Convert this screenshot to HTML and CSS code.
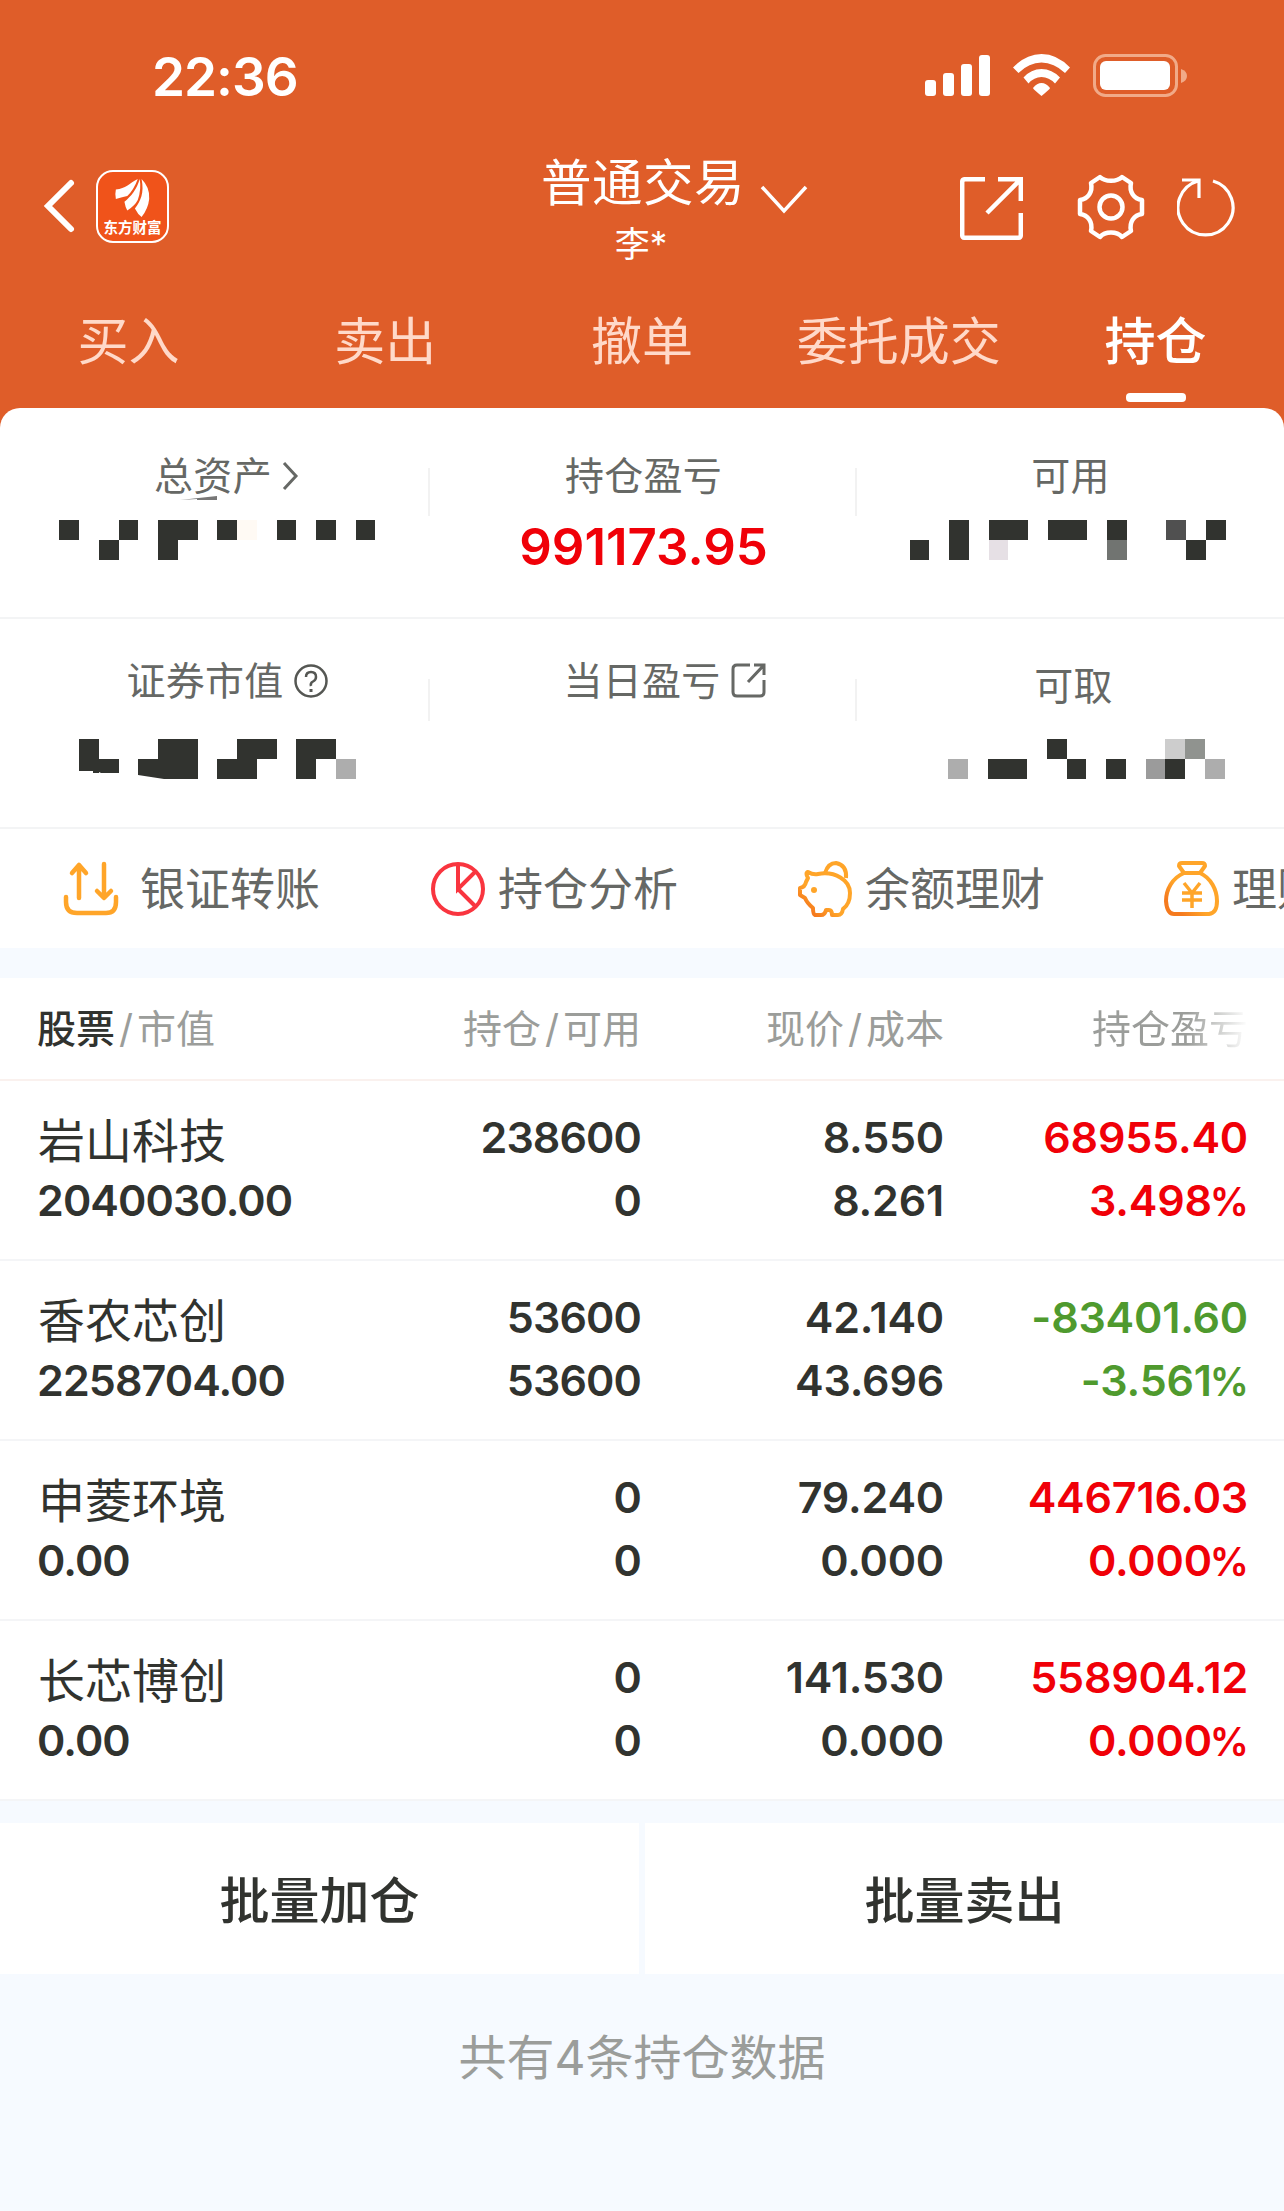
FILE: index.html
```
<!doctype html>
<html lang="zh-CN">
  <head>
    <meta charset="UTF-8" />
    <meta name="viewport" content="width=device-width, initial-scale=1.0" />
    <title>普通交易 - 持仓</title>
    <link rel="stylesheet" href="styles.css">
  </head>
  <body>
    <header class="top">
      <div class="statusbar">
        <span class="time">22:36</span>
        <svg class="status-icons" width="264" height="44" viewBox="0 0 264 44">
          <g fill="#fff">
            <rect x="0" y="26" width="11" height="16" rx="3" />
            <rect x="18" y="19" width="11" height="23" rx="3" />
            <rect x="36" y="10" width="11" height="32" rx="3" />
            <rect x="54" y="1" width="11" height="41" rx="3" />
            <path d="M88 13.500Q101 0 116.500 0Q132 0 145 13.500L140 19Q129 8.500 116.500 8.500Q104 8.500 93.500 19Z" />
            <path d="M98.500 23.500Q106 15 116.500 15Q127 15 135 23.500L130 29.500Q124 23 116.500 23Q109 23 103.500 29.500Z" />
            <path d="M108 34Q112 29 116.500 29Q121 29 125 34Q125 35 116.500 42Q108 35 108 34Z" />
            <rect x="175" y="7" width="70" height="29" rx="6" />
          </g>
          <rect x="169.500" y="1.500" width="82" height="40" rx="11" fill="none" stroke="#f1aa88" stroke-width="3" />
          <path d="M256 15q6 2 6 7t-6 7z" fill="#f1aa88" />
        </svg>
      </div>

      <div class="navbar">
        <div class="nav-left">
          <svg width="34" height="56" viewBox="0 0 34 56">
            <path d="M29 5L6 28L29 51" fill="none" stroke="#fff" stroke-width="6" stroke-linecap="round" />
          </svg>
          <div class="logo">
            <svg width="40" height="42" viewBox="0 0 40 42" fill="#fff">
              <path d="M25 1C15 6 13 11 2 12Q1 16 2 22Q9 20 14 19Q21 12 25 1Z" />
              <path d="M27 1C24 12 18 19 11 25Q12 31 14 34Q22 29 25 23Q29 12 27 1Z" />
              <path d="M29 1C32 16 28 24 22 32Q25 38 29 41Q36 32 37 22Q38 10 29 1Z" />
            </svg>
            <span>东方财富</span>
          </div>
        </div>
        <div class="nav-title">
          <h1>普通交易</h1>
          <p>李*</p>
        </div>
        <svg class="nav-arrow" width="48" height="32" viewBox="0 0 48 32">
          <path d="M2 3L24 27L46 3" fill="none" stroke="#fff" stroke-width="3.500" />
        </svg>
        <div class="nav-right">
          <svg width="63" height="63" viewBox="0 0 63 63" fill="none" stroke="#fff" stroke-width="4.500">
            <path d="M25 2.200H5Q2.200 2.200 2.200 5V58Q2.200 60.800 5 60.800H58Q60.800 60.800 60.800 58V36M38 2.200H60.800V24M60 3L27 36" />
          </svg>
          <svg class="gear" width="68" height="66" viewBox="0 0 68 66" fill="none" stroke="#fff" stroke-width="4.500">
            <path d="M23 3C28 8 40 8 45 3L54 9C52 18 57 25 65 26V40C57 41 52 48 54 57L45 63C40 57 28 57 23 63L14 57C16 48 11 41 3 40V26C11 25 16 18 14 9Z" stroke-linejoin="round" />
            <circle cx="34" cy="33" r="11.500" />
          </svg>
          <svg class="refresh" width="60" height="60" viewBox="0 0 60 60" fill="none" stroke="#fff" stroke-width="3.200">
            <path d="M36 4A27.500 27.500 0 1 1 21 4M5 3H22V21" />
          </svg>
        </div>
      </div>

      <nav class="tabs">
        <a>买入</a>
        <a>卖出</a>
        <a>撤单</a>
        <a>委托成交</a>
        <a class="active">持仓</a>
      </nav>
    </header>

    <main>
      <section class="assets">
        <div class="asset-row">
          <div class="asset">
            <div class="label has-icon">总资产
              <svg width="18" height="30" viewBox="0 0 18 30">
                <path d="M2 2L14 15L2 28" fill="none" stroke="#666865" stroke-width="3" />
              </svg>
            </div>
            <svg class="mask" width="316" height="64" viewBox="0 0 316 64" fill="#31332f">
              <path d="M121 4L158 0V4H138V3Z" fill="#777" />
              <path d="M0 24h20v20H0zM60 24h19v20H60zM40 44h20v20H40zM99 24h40v20h-20v20H99zM158 24h20v20h-20zM218 24h19v20h-19zM257 24h20v20h-20zM297 24h19v20h-19z" />
              <path d="M178 24h20v20h-20z" fill="#fffaf4" />
            </svg>
          </div>
          <div class="asset">
            <div class="label">持仓盈亏</div>
            <div class="total">991173.95</div>
          </div>
          <div class="asset">
            <div class="label usable">可用</div>
            <svg class="mask" width="316" height="64" viewBox="0 0 316 64" fill="#31332f">
              <path d="M0 44h19v20H0zM39 24h20v40H39zM79 24h39v20H79zM138 24h39v20h-39zM197 24h20v20h-20zM296 24h20v20h-20zM276 44h20v20h-20z" />
              <path d="M79 44h19v20H79z" fill="#e6e0e5" />
              <path d="M197 44h20v20h-20z" fill="#717471" />
              <path d="M256 24h20v20h-20z" fill="#505050" />
            </svg>
          </div>
        </div>
        <div class="asset-row second">
          <div class="asset">
            <div class="label has-icon">证券市值
              <svg width="34" height="34" viewBox="0 0 34 34" fill="none" stroke="#555753" stroke-width="2.500">
                <circle cx="17" cy="17" r="15.500" />
                <path d="M12 13Q12 8 17 8T22 13Q22 16 19 17.500T17 22" />
                <path d="M17 25v3" stroke-width="3" />
              </svg>
            </div>
            <svg class="mask low" width="277" height="40" viewBox="0 0 277 40" fill="#31332f">
              <path d="M0 0h20v20h20v14H22l-2-1v1h-6v-2H0zM59 20h20V0h40v40H85L59 36zM138 20h20V0h40v20h-20v20h-40zM217 0h40v20h-20v20h-20z" />
              <path d="M257 20h20v20h-20z" fill="#adadad" />
            </svg>
          </div>
          <div class="asset">
            <div class="label has-icon today">当日盈亏
              <svg width="35" height="35" viewBox="0 0 35 35" fill="none" stroke="#666865" stroke-width="3">
                <path d="M19 2H6Q2 2 2 6V29Q2 33 6 33H29Q33 33 33 29V17M23 2H33V12M32 3L17 19" />
              </svg>
            </div>
          </div>
          <div class="asset">
            <div class="label lower">可取</div>
            <svg class="mask low right" width="277" height="40" viewBox="0 0 277 40" fill="#31332f">
              <path d="M40 20h39v20H40zM99 0h20v20H99zM119 20h19v20h-19zM158 20h20v20h-20zM217 20h20v20h-20z" />
              <path d="M0 20h20v20H0zM257 20h20v20h-20z" fill="#adadad" />
              <path d="M198 20h19v20h-19z" fill="#9b9b9b" />
              <path d="M217 0h20v20h-20z" fill="#cdcdcd" />
              <path d="M237 0h20v20h-20z" fill="#90938f" />
            </svg>
          </div>
        </div>
      </section>

      <section class="shortcuts">
        <a class="transfer">
          <svg width="56" height="56" viewBox="0 0 56 56" fill="none" stroke="#ffa529" stroke-width="4.500" stroke-linecap="round" stroke-linejoin="round">
            <path d="M16 37V4M9 12L16 4L23 12M41 3V36M34 30L41 37L48 30" />
            <path d="M3 36V41Q3 52 14 52H43Q53 52 53 41V36" />
          </svg>
          <span>银证转账</span>
        </a>
        <a>
          <svg width="56" height="56" viewBox="0 0 56 56" fill="none" stroke="#f9353f" stroke-width="4">
            <circle cx="28" cy="28" r="25" />
            <path d="M28 3V28L46 10M28 28L46 46" />
          </svg>
          <span>持仓分析</span>
        </a>
        <a>
          <svg width="56" height="56" viewBox="0 0 56 56" fill="none" stroke="#ffa529" stroke-width="4" stroke-linejoin="round">
            <defs>
              <linearGradient id="gold" x1="0" y1="1" x2="1" y2="0">
                <stop offset="0.150" stop-color="#f57a1e" />
                <stop offset="0.400" stop-color="#ffa529" />
              </linearGradient>
            </defs>
            <path d="M11 11Q16 14 21 13C38 10 53 19 53 32Q53 43 46 48Q45 54 41 54H35Q35 49 32 49H29Q28 54 24 54H18Q16 53 16 47Q10 42 8 37L3 34V27Q8 26 9 21L11 17Q8 12 11 11Z" stroke="url(#gold)" />
            <path d="M28 12Q31 2 39 2Q50 4 49 17" />
            <circle cx="17" cy="29" r="3" fill="#ffa529" stroke="none" />
          </svg>
          <span>余额理财</span>
        </a>
        <a>
          <svg width="56" height="56" viewBox="0 0 56 56" fill="none" stroke="url(#gold)" stroke-width="4" stroke-linejoin="round">
            <path d="M20 12L15 5Q15 2 18 2H38Q41 2 41 5L36 12ZM20 12C8 17 2 29 2 40Q3 53 10 53H45Q53 52 53 40C53 29 47 17 36 12" />
            <path d="M20 22L28 32L36 22M18 32H38M18 39H38M28 32V47" stroke="#ffa529" stroke-width="3.500" />
          </svg>
          <span>理财</span>
        </a>
      </section>

      <section class="holdings">
        <div class="row head">
          <div><b>股票</b><i>/</i>市值</div>
          <div>持仓<i>/</i>可用</div>
          <div>现价<i>/</i>成本</div>
          <div class="fade">持仓盈亏</div>
        </div>
        <div class="row">
          <div><strong>岩山科技</strong>2040030.00</div>
          <div>238600<br />0</div>
          <div class="price">8.550<br />8.261</div>
          <div class="price up">68955.40<br />3.498<em>%</em></div>
        </div>
        <div class="row">
          <div><strong>香农芯创</strong>2258704.00</div>
          <div>53600<br />53600</div>
          <div class="price">42.140<br />43.696</div>
          <div class="price down">-83401.60<br />-3.561<em>%</em></div>
        </div>
        <div class="row">
          <div><strong>申菱环境</strong>0.00</div>
          <div>0<br />0</div>
          <div class="price">79.240<br />0.000</div>
          <div class="price up">446716.03<br />0.000<em>%</em></div>
        </div>
        <div class="row">
          <div><strong>长芯博创</strong>0.00</div>
          <div>0<br />0</div>
          <div class="price">141.530<br />0.000</div>
          <div class="price up">558904.12<br />0.000<em>%</em></div>
        </div>
      </section>

      <div class="batch">
        <button>批量加仓</button>
        <button>批量卖出</button>
      </div>
      <p class="count">共有4条持仓数据</p>
    </main>
  </body>
</html>
```

FILE: styles.css
```
* {
  box-sizing: border-box;
}
body {
  margin: 0;
  width: 1284px;
  height: 2211px;
  overflow: hidden;
  background: #f6faff;
  color: #31332f;
  font-family: Inter, "Noto Sans CJK SC", sans-serif;
}
h1,
p {
  margin: 0;
  font-weight: normal;
}
svg {
  display: block;
  flex: none;
}

.top {
  height: 430px;
  background: #df5d29;
  color: #fff;
}
.statusbar {
  height: 150px;
  padding: 54px 95px 0 152px;
  display: flex;
  justify-content: space-between;
}
.time {
  font-size: 53px;
  line-height: 46px;
  font-weight: 600;
  letter-spacing: -1px;
}

.navbar {
  height: 136px;
  display: flex;
}
.nav-left {
  width: 541px;
  padding: 20px 0 0 42px;
  display: flex;
  gap: 20px;
}
.nav-left > svg {
  margin-top: 8px;
}
.logo {
  width: 73px;
  height: 73px;
  border: 2px solid #fff;
  border-radius: 17px;
  background: #f0531a;
  display: flex;
  flex-direction: column;
  align-items: center;
  padding-top: 6px;
}
.logo svg {
  height: 40px;
}
.logo span {
  font: 700 14.500px/18px "Noto Sans CJK SC", sans-serif;
  white-space: nowrap;
}
.nav-title {
  width: 200px;
  text-align: center;
}
.nav-title h1 {
  font-size: 50.500px;
  line-height: 66px;
  letter-spacing: 0.5px;
  white-space: nowrap;
}
.nav-title p {
  font-size: 35px;
  line-height: 57px;
}
.nav-arrow {
  margin: 34px 0 0 19px;
}
.nav-right {
  display: flex;
  padding: 27px 0 0 152px;
}
.gear {
  margin: -3px 0 0 54px;
}
.refresh {
  margin-left: 32px;
}

.tabs {
  display: grid;
  grid-template-columns: repeat(5, 1fr);
  text-align: center;
  font-size: 51px;
  line-height: 111px;
  color: #ffd9c9;
}
.tabs .active {
  color: #fff;
  font-weight: 500;
}
.tabs .active::after {
  content: "";
  display: block;
  width: 60px;
  height: 9px;
  border-radius: 4px;
  background: #fff;
  margin: -4px auto 0;
}

main {
  margin-top: -22px;
  position: relative;
}
.assets {
  background: #fff;
  border-radius: 20px 20px 0 0;
}
.asset-row {
  height: 211px;
  border-bottom: 2px solid #f3f4f5;
  display: grid;
  grid-template-columns: 430px 427px 427px;
}
.asset {
  padding-top: 35px;
  display: flex;
  flex-direction: column;
  align-items: center;
  background: linear-gradient(#f2f2f2, #f2f2f2) right 60px / 2px 48px no-repeat;
}
.asset:first-child {
  padding-left: 4px;
}
.asset:last-child {
  background: none;
  padding-right: 6px;
}
.label {
  height: 60px;
  display: flex;
  align-items: center;
  font-size: 39px;
  letter-spacing: 0.3px;
  color: #666865;
}
.has-icon {
  gap: 10px;
  padding-left: 20px;
}
.has-icon svg {
  margin-top: 5px;
}
.usable {
  padding-left: 6px;
}
.today {
  padding-left: 42px;
}
.mask {
  margin-top: -7px;
}
.total {
  font-size: 51px;
  font-weight: 600;
  line-height: 87px;
  color: #f00008;
}
.second {
  height: 210px;
}
.second .asset {
  padding-top: 29px;
  background-size: 2px 42px;
}
.second .asset:last-child {
  padding-left: 6px;
  padding-right: 0;
}
.low {
  margin-top: 31px;
}
.lower {
  position: relative;
  top: 5px;
}
.right {
  margin-left: 26px;
}

.shortcuts {
  height: 119px;
  background: #fff;
  display: flex;
  overflow: hidden;
  padding-left: 63px;
  font-size: 45px;
  color: #666865;
}
.shortcuts a {
  flex: none;
  width: 367px;
  height: 119px;
  display: flex;
  align-items: center;
  gap: 12px;
  white-space: nowrap;
}
.shortcuts span {
  padding-bottom: 5px;
}
.shortcuts .transfer {
  gap: 21px;
}

.holdings {
  margin-top: 30px;
  background: #fff;
}
.row {
  height: 180px;
  padding: 25px 36px 0 37px;
  border-bottom: 2px solid #f4f5f7;
  display: grid;
  grid-template-columns: 303px 301px 303px 304px;
  text-align: right;
  font-size: 43px;
  font-weight: 580;
  letter-spacing: -0.9px;
  line-height: 63px;
}
.row div:first-child {
  text-align: left;
}
.row .price {
  letter-spacing: -0.2px;
}
.row strong {
  display: block;
  font-size: 47px;
  font-weight: 400;
  letter-spacing: 0;
  line-height: 57px;
  padding: 6px 0 0 1px;
}
.row em {
  font-style: normal;
  font-size: 39px;
  letter-spacing: -1px;
  margin-left: -2px;
}
.head {
  height: 103px;
  padding-top: 19px;
  border-bottom-color: #faf1ee;
  font-size: 39px;
  font-weight: 400;
  letter-spacing: 0;
  color: #9b9d9a;
}
.head b {
  color: #31332f;
  font-weight: 500;
}
.head i {
  font-style: normal;
  margin: 0 4px;
}
.head .fade {
  color: transparent;
  background: linear-gradient(90deg, #9b9d9a 80%, #fff) text;
}
.up {
  color: #f00008;
}
.down {
  color: #4f9a2e;
}

.batch {
  margin-top: 22px;
  display: flex;
  gap: 6px;
}
.batch button {
  flex: 1;
  height: 151px;
  border: none;
  padding: 0 0 4px;
  background: #fff;
  color: #31332f;
  font: 500 50px "Noto Sans CJK SC", sans-serif;
}
.count {
  text-align: center;
  font-size: 48px;
  line-height: 168px;
  color: #9b9d9a;
}
```
